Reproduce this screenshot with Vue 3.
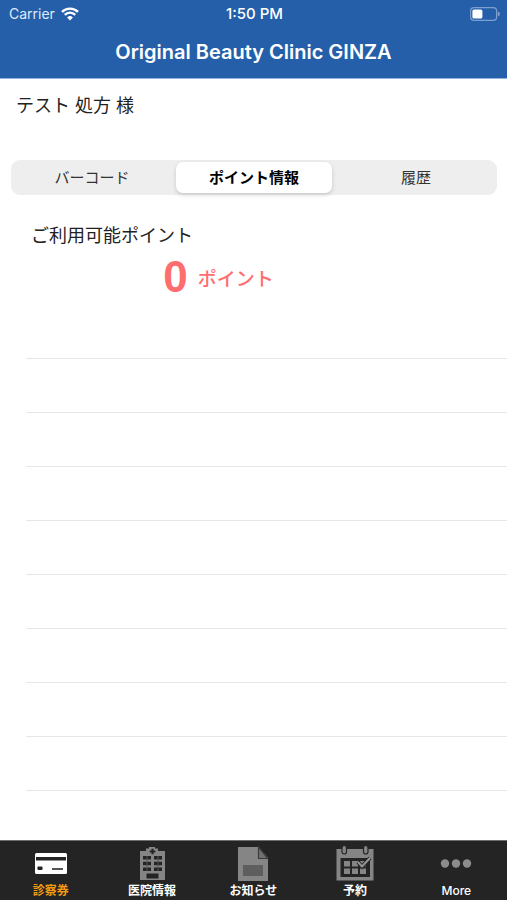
<script setup>
import { ref } from 'vue'

const segments = ['バーコード', 'ポイント情報', '履歴']
const activeSegment = ref(1)
const points = ref(0)
const tabs = [
  { id: 'card', label: '診察券' },
  { id: 'clinic', label: '医院情報' },
  { id: 'news', label: 'お知らせ' },
  { id: 'booking', label: '予約' },
  { id: 'more', label: 'More' },
]
const activeTab = ref('card')
</script>

<template>
  <div class="screen">
    <header class="top">
      <div class="status">
        <span class="carrier">
          Carrier
          <svg class="wifi" viewBox="0 0 18 14" aria-hidden="true">
            <path d="M1 4.9A11.3 11.3 0 0 1 17 4.9" />
            <path d="M3.8 7.8A7.3 7.3 0 0 1 14.2 7.8" />
            <path class="dot" d="M9 13.6L6.1 10.5A4.2 4.2 0 0 1 11.9 10.5Z" />
          </svg>
        </span>
        <span class="clock">1:50 PM</span>
        <span class="power">
          <svg viewBox="0 0 30 14" class="battery" aria-hidden="true">
            <rect class="shell" x="0.6" y="0.6" width="26" height="12.8" rx="3.4" />
            <rect x="2.4" y="2.4" width="10" height="9.2" rx="1.6" fill="#fff" />
            <path d="M27.8 4.6Q30 5.4 30 7T27.8 9.4Z" fill="#7ba0d0" />
          </svg>
        </span>
      </div>
      <h1 class="title">Original Beauty Clinic GINZA</h1>
    </header>

    <main class="content">
      <p class="patient">テスト 処方 様</p>

      <div class="segments" role="group">
        <button
          v-for="(name, i) in segments"
          :key="name"
          type="button"
          class="segment"
          :class="{ active: i === activeSegment }"
          :aria-pressed="i === activeSegment"
          @click="activeSegment = i"
        >{{ name }}</button>
      </div>

      <section class="balance">
        <h2 class="caption">ご利用可能ポイント</h2>
        <p class="amount"><span class="number">{{ points }}</span><span class="unit">ポイント</span></p>
      </section>

      <ul class="rows">
        <li v-for="n in 9" :key="n" class="row"></li>
      </ul>
    </main>

    <nav class="tabs">
      <button
        v-for="tab in tabs"
        :key="tab.id"
        type="button"
        class="tab"
        :class="{ current: tab.id === activeTab }"
        @click="activeTab = tab.id"
      >
        <svg class="icon" viewBox="0 0 38 38" aria-hidden="true">
          <template v-if="tab.id === 'card'">
            <rect x="3" y="9" width="32" height="21" rx="1.5" fill="#fff" />
            <rect x="4" y="13" width="30" height="3.5" fill="#242424" />
            <rect x="5.5" y="22.5" width="5" height="3.5" rx="0.8" fill="#242424" />
            <rect x="20" y="24" width="11" height="2" fill="#555" />
          </template>
          <template v-else-if="tab.id === 'clinic'">
            <path d="M7 7H13V4.5H16V3H22V4.5H25V7H32V36H7Z" fill="#858585" />
            <path d="M18.5 4.8H20.5V6.5H22.3V8.5H20.5V10.3H18.5V8.5H16.7V6.5H18.5Z" fill="#242424" />
            <path d="M10 12H18V15.5H10ZM21 12H29V15.5H21ZM10 17.8H18V21.3H10ZM21 17.8H29V21.3H21ZM10 23.6H18V27H10ZM21 23.6H29V27H21ZM13.5 29.5H25.5V34.5H13.5Z" fill="#242424" />
            <path d="M14 12V27M25 12V27" stroke="#555" stroke-width="1" />
          </template>
          <template v-else-if="tab.id === 'news'">
            <path d="M4 3H24.5L34 13.5V37H4Z" fill="#858585" />
            <path d="M24.5 3V14.5H34Z" fill="#707070" stroke="#3a3a3a" stroke-width="1.2" />
            <rect x="9" y="21" width="20" height="11" fill="#5e5e5e" />
          </template>
          <template v-else-if="tab.id === 'booking'">
            <path d="M0.5 5H37.5V36.5H0.5Z" fill="#858585" />
            <path d="M4.5 14H34V33H4.5Z" fill="#242424" />
            <rect x="6" y="1.5" width="4.5" height="8.5" rx="2.2" fill="#858585" stroke="#242424" stroke-width="1.2" />
            <rect x="27.5" y="1.5" width="4.5" height="8.5" rx="2.2" fill="#858585" stroke="#242424" stroke-width="1.2" />
            <path d="M8 17H14V22.5H8ZM16 17H22V22.5H16ZM24 17H30V22.5H24ZM8 24.5H14V30H8ZM16 24.5H22V30H16ZM24 24.5H30V30H24Z" fill="#858585" />
            <path d="M22 18L26 22.5L34 14" fill="none" stroke="#242424" stroke-width="4" />
            <path d="M22 18L26 22.5L34 14" fill="none" stroke="#959595" stroke-width="2" />
          </template>
          <template v-else>
            <circle cx="8" cy="19.5" r="4.2" fill="#8c8c8c" />
            <circle cx="19" cy="19.5" r="4.2" fill="#8c8c8c" />
            <circle cx="30" cy="19.5" r="4.2" fill="#8c8c8c" />
          </template>
        </svg>
        <span class="label">{{ tab.label }}</span>
      </button>
    </nav>
  </div>
</template>

<style>
body {
  margin: 0;
  background: #fff;
}
</style>

<style scoped>
.screen {
  display: flex;
  flex-direction: column;
  min-height: 100vh;
  background: #fff;
  color: #222;
  font-family: Inter, "Noto Sans CJK JP", sans-serif;
}

.top {
  background: #255fa9;
  color: #fff;
  border-bottom: 1px solid #8fb4e2;
}

.status {
  display: grid;
  grid-template-columns: 1fr auto 1fr;
  align-items: center;
  height: 27px;
  padding: 0 7px 0 9px;
  font-size: 14px;
}

.carrier {
  display: flex;
  align-items: center;
  gap: 6px;
  color: #dfeafa;
}

.wifi {
  width: 18px;
  height: 14px;
  fill: none;
  stroke: #fff;
  stroke-width: 2.4;
}

.wifi .dot {
  fill: #fff;
  stroke: none;
}

.clock {
  font-size: 15px;
  font-weight: 500;
}

.power {
  display: flex;
  justify-content: flex-end;
}

.battery {
  width: 30px;
  height: 14px;
}

.shell {
  fill: none;
  stroke: #7ba0d0;
  stroke-width: 1.2;
}

.title {
  margin: 0;
  height: 51px;
  line-height: 51px;
  text-align: center;
  font-size: 20px;
  font-weight: 600;
}

.content {
  flex: 1;
}

.patient {
  margin: 0;
  padding: 13px 16px 0;
  font-size: 18px;
  line-height: 27px;
}

.segments {
  display: grid;
  grid-template-columns: repeat(3, 1fr);
  margin: 41px 10px 0 11px;
  padding: 2px 0;
  border-radius: 9px;
  background: #eee;
}

.segment {
  height: 31px;
  padding: 0 0 2px;
  border: 0;
  border-radius: 7px;
  background: transparent;
  color: #333;
  font: inherit;
  font-size: 15px;
}

.segment.active {
  margin: 0 3px;
  background: #fff;
  color: #000;
  font-weight: 700;
  box-shadow: 0 2px 4px rgba(0, 0, 0, 0.16);
}

.balance {
  padding: 27px 31px 0;
}

.caption {
  margin: 0;
  font-size: 18px;
  font-weight: 400;
  line-height: 27px;
}

.amount {
  display: flex;
  align-items: center;
  justify-content: center;
  gap: 10px;
  margin: 0;
  padding-right: 70px;
  height: 56px;
  color: #ff6e6e;
}

.number {
  font-family: "Liberation Sans", sans-serif;
  font-size: 44px;
  font-weight: 700;
}

.unit {
  font-size: 19px;
  font-weight: 500;
}

.rows {
  margin: 0;
  padding: 0 0 0 26px;
  list-style: none;
}

.row {
  box-sizing: border-box;
  height: 54px;
  border-bottom: 1px solid #e6e6e6;
}

.tabs {
  display: grid;
  grid-template-columns: repeat(5, 1fr);
  background: #242424;
  border-top: 1px solid #6e6e6e;
}

.tab {
  display: flex;
  flex-direction: column;
  align-items: center;
  padding: 3px 0 0;
  border: 0;
  background: transparent;
  color: #fff;
  font: inherit;
  font-size: 12px;
  font-weight: 700;
}

.tab:last-child {
  font-weight: 500;
}

.tab.current {
  color: #f39c12;
}

.icon {
  width: 38px;
  height: 38px;
}

.label {
  line-height: 18px;
}
</style>
